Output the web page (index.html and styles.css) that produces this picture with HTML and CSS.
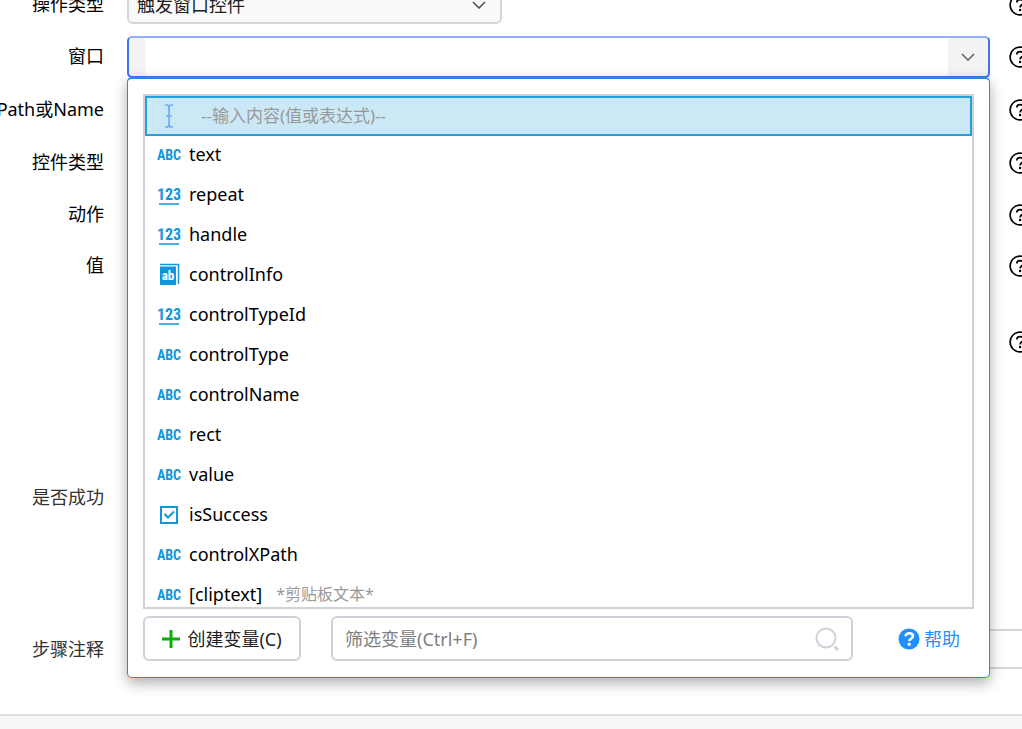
FILE: index.html
```html
<!DOCTYPE html>
<html lang="zh-CN">
<head>
<meta charset="utf-8">
<title>触发窗口控件</title>
<link rel="stylesheet" href="styles.css">
</head>
<body>
<svg class="symbols" aria-hidden="true">
  <symbol id="help" viewBox="0 0 22 22"><circle cx="11" cy="11" r="9.9" fill="none" stroke="currentColor" stroke-width="1.6"/><path d="M7.8 8.6c0-4 6.6-4 6.6-.2 0 2.400-3.300 2.300-3.300 5" fill="none" stroke="currentColor" stroke-width="1.7"/><circle cx="11.100" cy="16" r="1.200" fill="currentColor"/></symbol>
  <symbol id="chevron" viewBox="0 0 14 8"><path d="M1 1l6 6 6-6" fill="none" stroke="currentColor" stroke-width="1.600"/></symbol>
  <symbol id="abc" viewBox="0 0 24 24"><text x="12" y="18" class="glyph">ABC</text></symbol>
  <symbol id="num" viewBox="0 0 24 24"><text x="12" y="18" class="glyph glyph-num">123</text><path d="M2 22h20" stroke="currentColor" stroke-width="1.500"/></symbol>
</svg>
<main class="form">
  <div class="row">
    <label class="label" for="op">操作类型</label>
    <div class="control op"><select id="op"><option>触发窗口控件</option></select><svg class="chev"><use href="#chevron"/></svg></div>
    <button class="tip" aria-label="说明"><svg><use href="#help"/></svg></button>
  </div>
  <div class="row">
    <label class="label" for="win">窗口</label>
    <div class="control combo">
      <input id="win" type="text">
      <button class="toggle" aria-label="展开"><svg><use href="#chevron"/></svg></button>
      <section class="popup">
        <ul class="list" role="listbox" aria-label="变量">
          <li class="item selected" role="option" aria-selected="true"><svg class="icon" viewBox="0 0 24 24"><path d="M8 1h1.500Q12 1 12 3.500v17Q12 23 9.500 23H8M16 1h-1.500Q12 1 12 3.500M16 23h-1.500Q12 23 12 20.500M9 12h6" fill="none" stroke="#6eb0ef" stroke-width="1.700"/></svg><span class="hint">--输入内容(值或表达式)--</span></li>
          <li class="item" role="option"><svg class="icon"><use href="#abc"/></svg><span>text</span></li>
          <li class="item" role="option"><svg class="icon"><use href="#num"/></svg><span>repeat</span></li>
          <li class="item" role="option"><svg class="icon"><use href="#num"/></svg><span>handle</span></li>
          <li class="item" role="option"><svg class="icon" viewBox="0 0 24 24"><path d="M3 4.500h16V23H3z" fill="currentColor"/><path d="M3 2.500h18.500V22" fill="none" stroke="currentColor" stroke-width="1.500"/><text x="11" y="18" class="glyph glyph-ab">ab</text></svg><span>controlInfo</span></li>
          <li class="item" role="option"><svg class="icon"><use href="#num"/></svg><span>controlTypeId</span></li>
          <li class="item" role="option"><svg class="icon"><use href="#abc"/></svg><span>controlType</span></li>
          <li class="item" role="option"><svg class="icon"><use href="#abc"/></svg><span>controlName</span></li>
          <li class="item" role="option"><svg class="icon"><use href="#abc"/></svg><span>rect</span></li>
          <li class="item" role="option"><svg class="icon"><use href="#abc"/></svg><span>value</span></li>
          <li class="item" role="option"><svg class="icon" viewBox="0 0 24 24"><path d="M4 5h16v16H4z" fill="none" stroke="currentColor" stroke-width="2"/><path d="M7.500 12l3.500 3.500 6-6" fill="none" stroke="currentColor" stroke-width="2"/></svg><span>isSuccess</span></li>
          <li class="item" role="option"><svg class="icon"><use href="#abc"/></svg><span>controlXPath</span></li>
          <li class="item" role="option"><svg class="icon"><use href="#abc"/></svg><span>[cliptext]</span><span class="note">*剪贴板文本*</span></li>
        </ul>
        <div class="tools">
          <button class="create"><svg viewBox="0 0 18 18"><path d="M9 0v18M0 9h18" stroke="#0aad0a" stroke-width="3"/></svg>创建变量(C)</button>
          <div class="search">
            <input type="text" aria-label="筛选变量" placeholder="筛选变量(Ctrl+F)">
            <svg viewBox="0 0 24 24"><circle cx="11" cy="11" r="9.500" fill="none" stroke="#ced3d9" stroke-width="2"/><path d="M19.500 19.500l3.500 3.500" stroke="#ced3d9" stroke-width="3"/></svg>
          </div>
          <a class="help" href="#help"><svg viewBox="0 0 22 22"><circle cx="11" cy="11" r="10.500" fill="#1e90ff"/><path d="M7.500 8.200c.6-4.200 7.400-3.700 7.400-.2 0 2.700-3.600 2.400-3.600 5" fill="none" stroke="#fff" stroke-width="2.600"/><circle cx="11.200" cy="16.300" r="1.700" fill="#fff"/></svg>帮助</a>
        </div>
      </section>
    </div>
    <button class="tip" aria-label="说明"><svg><use href="#help"/></svg></button>
  </div>
  <div class="row"><span class="label">XPath或Name</span><button class="tip" aria-label="说明"><svg><use href="#help"/></svg></button></div>
  <div class="row"><span class="label">控件类型</span><button class="tip" aria-label="说明"><svg><use href="#help"/></svg></button></div>
  <div class="row"><span class="label">动作</span><button class="tip" aria-label="说明"><svg><use href="#help"/></svg></button></div>
  <div class="row"><span class="label">值</span><button class="tip" aria-label="说明"><svg><use href="#help"/></svg></button></div>
  <div class="row"><button class="tip" aria-label="说明"><svg><use href="#help"/></svg></button></div>
  <div class="row"><span class="label soft">是否成功</span></div>
  <div class="row"><label class="label soft" for="note">步骤注释</label><input class="comment" id="note" type="text"></div>
</main>
<footer class="footer"></footer>
</body>
</html>
```
FILE: styles.css
```css
* { box-sizing: border-box; }
html { height: 100%; }
body {
  margin: 0;
  min-height: 100%;
  overflow: hidden;
  display: flex;
  flex-direction: column;
  background: #fff;
  color: #000;
  font: 18px/24px "Noto Sans", "Noto Sans CJK SC", sans-serif;
}
input, button, select { font: inherit; color: inherit; }
button { padding: 0; border: 0; background: none; }
svg { display: block; flex: none; }
.symbols { position: absolute; width: 0; height: 0; }

.form {
  display: grid;
  grid-template-rows: 52px 52px 54px 52px 51px 51px 102px 208px 96px;
  margin-top: -21px;
}
.row {
  display: grid;
  grid-template-columns: 104px minmax(0, 1fr) 13px;
  column-gap: 23px;
  align-items: center;
}
.label {
  grid-column: 1;
  display: flex;
  justify-content: flex-end;
  padding-bottom: 2px;
  white-space: nowrap;
}
.soft { color: #333; padding-bottom: 0; }
.control { grid-column: 2; position: relative; margin-right: -4px; }
.tip { grid-column: 3; overflow: hidden; width: 100%; }
.tip svg { width: 22px; height: 22px; }
.op { width: 375px; }
.op select {
  appearance: none;
  width: 100%;
  height: 38px;
  padding: 0 8px;
  border: 2px solid #d3d6da;
  border-radius: 6px;
  background: #fafafa;
  color: #222;
}
.chev { position: absolute; right: 16px; top: 15px; width: 14px; height: 8px; color: #555; }

.combo {
  display: flex;
  height: 42px;
  padding-left: 16px;
  border: 2px solid #4275f2;
  border-top-color: #94aff8;
  border-radius: 5px;
  background: #f3f3f3;
}
.combo > input {
  flex: 1;
  min-width: 0;
  border: 0;
  outline: 0;
  background: #fff;
}
.toggle { width: 40px; display: grid; place-items: center; color: #666; }
.toggle svg { width: 14px; height: 8px; }

.popup {
  position: absolute;
  z-index: 2;
  top: 39px;
  left: -2px;
  right: -2px;
  padding: 15px 15px 16px;
  border: 1px solid #2588f0;
  border-top-width: 2px;
  border-radius: 5px;
  background: #fff;
  box-shadow: 0 5px 14px rgba(0, 0, 0, .32);
}
.list {
  height: 515px;
  margin: 0;
  padding: 0;
  overflow: hidden;
  list-style: none;
  border: 2px solid #ced3d9;
}
.item {
  display: flex;
  align-items: center;
  height: 40px;
  padding: 0 12px 4px;
  white-space: pre;
}
.icon { width: 24px; height: 24px; margin-right: 8px; color: #1296db; }
.selected { padding: 0 10px; border: 2px solid #26a0da; background: #cbe8f6; }
.hint { margin-left: 12px; font-size: 17px; color: #999; }
.note { margin-left: 14px; font-size: 16px; color: #999; }
.glyph {
  font: bold 14px "Liberation Sans Narrow", "Roboto Condensed", "DejaVu Sans Condensed", sans-serif;
  text-anchor: middle;
  fill: currentColor;
}
.glyph-num { font-size: 16px; }
.glyph-ab { font-size: 13px; fill: #fff; }

.tools {
  display: grid;
  grid-template-columns: 158px minmax(0, 1fr) 62px;
  align-items: center;
  padding: 7px 14px 0 0;
}
.create, .search {
  height: 45px;
  border: 2px solid #ced3d9;
  border-radius: 6px;
  background: #fff;
}
.create { display: flex; align-items: center; justify-content: center; gap: 7px; color: #222; }
.create svg { width: 18px; height: 18px; }
.search { display: flex; align-items: center; margin: 0 45px 0 30px; padding: 0 12px; }
.search input { flex: 1; min-width: 0; padding: 0; border: 0; outline: 0; }
.search input::placeholder { color: #808080; opacity: 1; }
.search svg { width: 24px; height: 24px; }
.help { display: flex; align-items: center; gap: 4px; color: #1e90ff; text-decoration: none; white-space: nowrap; }
.help svg { width: 22px; height: 22px; }

.comment {
  grid-column: 2 / 4;
  height: 40px;
  margin-right: -10px;
  border: 2px solid #d3d6dc;
  background: #fff;
}
.footer { flex: 1; margin-top: 17px; border-top: 2px solid #e0e0e0; background: #f7f7f7; }
```
